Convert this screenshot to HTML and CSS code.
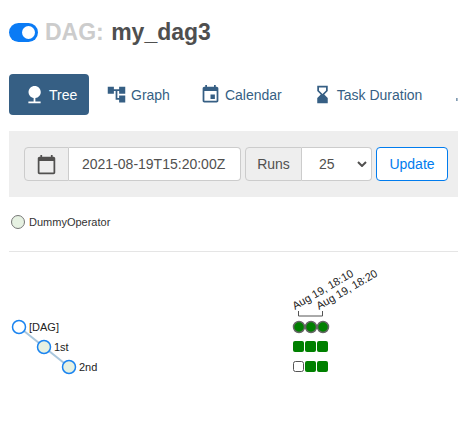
FILE: index.html
```html
<!DOCTYPE html>
<html lang="en">
<head>
  <meta charset="UTF-8">
  <title>DAG: my_dag3</title>
  <link rel="stylesheet" href="styles.css">
</head>
<body>
  <div class="container">
    <h4 class="dag-title">
      <span class="toggle"><span class="toggle-knob"></span></span>
      <span class="dag-text"><span class="dag-label">DAG:</span> <span class="dag-name">my_dag3</span></span>
    </h4>

    <ul class="tabs">
      <li class="tab active">
        <svg class="tab-icon" viewBox="0 0 24 24"><path d="M13 16.120c3.470-.41 6.170-3.360 6.170-6.950 0-3.870-3.130-7-7-7s-7 3.130-7 7c0 3.470 2.520 6.340 5.830 6.890V20H5v2h14v-2h-6v-3.880z"/></svg>
        Tree
      </li>
      <li class="tab">
        <svg class="tab-icon" viewBox="0 0 24 24"><path d="M22 11V3h-7v3H9V3H2v8h7V8h2v10h4v3h7v-8h-7v3h-2V8h2v3z"/></svg>
        Graph
      </li>
      <li class="tab">
        <svg class="tab-icon" viewBox="0 0 24 24"><path d="M17 12h-5v5h5v-5zM16 1v2H8V1H6v2H5c-1.110 0-1.990.9-1.990 2L3 19c0 1.100.89 2 2 2h14c1.100 0 2-.9 2-2V5c0-1.100-.9-2-2-2h-1V1h-2zm3 18H5V8h14v11z"/></svg>
        Calendar
      </li>
      <li class="tab">
        <svg class="tab-icon" viewBox="0 0 24 24"><path d="M18 22l-.01-6L14 12l3.990-4.010L18 2H6v6l4 4-4 3.990V22h12zM8 7.500V4h8v3.500l-4 4-4-4z"/></svg>
        Task Duration
      </li>
      <li class="tab">
        <svg class="tab-icon" viewBox="0 0 24 24"><path d="M5 16h1.200v3.400H5z"/></svg>
      </li>
    </ul>

    <form class="well">
      <div class="input-group">
        <span class="addon addon-icon">
          <svg class="cal-icon" viewBox="0 0 24 24"><path d="M20 3h-1V1h-2v2H7V1H5v2H4c-1.100 0-2 .9-2 2v16c0 1.100.9 2 2 2h16c1.100 0 2-.9 2-2V5c0-1.100-.9-2-2-2zm0 18H4V8h16v13z"/></svg>
        </span>
        <span class="field field-date">2021-08-19T15:20:00Z</span>
      </div>
      <div class="input-group">
        <span class="addon">Runs</span>
        <span class="field field-runs">
          25
          <svg class="chevron" viewBox="0 0 10 6"><path d="M1 1l4 4 4-4"/></svg>
        </span>
      </div>
      <button class="update-btn" type="button">Update</button>
    </form>

    <div class="legend">
      <span class="legend-dot"></span>
      <span>DummyOperator</span>
    </div>

    <hr class="divider">

    <svg class="tree" width="449" height="160" viewBox="9 252 449 160">
      <path class="link" d="M19 327L44 347L69 367"/>
      <circle class="node root" cx="19" cy="327" r="6.5"/>
      <circle class="node" cx="44" cy="347" r="6.5"/>
      <circle class="node" cx="69" cy="367" r="6.5"/>
      <text class="node-text" x="29" y="331">[DAG]</text>
      <text class="node-text" x="54" y="351">1st</text>
      <text class="node-text" x="79" y="371">2nd</text>

      <text class="node-text" transform="translate(295 310) rotate(-30)">Aug 19, 18:10</text>
      <text class="node-text" transform="translate(319 310) rotate(-30)">Aug 19, 18:20</text>
      <path class="bracket" d="M298.500 311v5h24v-5"/>

      <circle class="run" cx="299" cy="327" r="5.500"/>
      <circle class="run" cx="311" cy="327" r="5.500"/>
      <circle class="run" cx="323" cy="327" r="5.500"/>

      <rect class="task" x="293" y="341" width="11" height="11" rx="2"/>
      <rect class="task" x="305" y="341" width="11" height="11" rx="2"/>
      <rect class="task" x="317" y="341" width="11" height="11" rx="2"/>

      <rect class="task empty" x="293.500" y="361.500" width="10" height="10" rx="2"/>
      <rect class="task" x="305" y="361" width="11" height="11" rx="2"/>
      <rect class="task" x="317" y="361" width="11" height="11" rx="2"/>
    </svg>
  </div>
</body>
</html>
```

FILE: styles.css
```css
html, body {
  margin: 0;
  height: 100%;
  overflow: hidden;
}

body {
  background-color: #fff;
  font-family: "Liberation Sans", Arial, sans-serif;
  color: #51504f;
  font-size: 14px;
}

.container {
  padding: 19px 0 0 9px;
  width: 449px;
}

.dag-title {
  display: flex;
  align-items: center;
  height: 26px;
  margin: 0 0 29px;
  font-size: 23px;
  font-weight: bold;
}

.dag-text {
  word-spacing: 1px;
}

.toggle {
  display: flex;
  justify-content: flex-end;
  align-items: center;
  width: 29px;
  height: 19px;
  padding: 0 3px;
  box-sizing: border-box;
  margin-right: 7px;
  background: #0a7bf5;
  border-radius: 10px;
}

.toggle-knob {
  width: 13px;
  height: 13px;
  border-radius: 50%;
  background: #fff;
}

.dag-label {
  color: #ccc;
}

.dag-name {
  color: #4f4f4f;
}

.tabs {
  display: flex;
  list-style: none;
  margin: 0 0 16px;
  padding: 0;
  white-space: nowrap;
  overflow: hidden;
}

.tab {
  display: flex;
  flex: none;
  align-items: center;
  gap: 4px;
  height: 41px;
  padding: 0 15px;
  color: #365f84;
  font-size: 14px;
  border-radius: 4px;
  box-sizing: border-box;
}

.tab.active {
  background: #365f84;
  color: #fff;
  width: 80px;
  margin-right: 2px;
}

.tab-icon {
  width: 21px;
  height: 21px;
  fill: currentColor;
  flex: none;
}

.well {
  display: flex;
  gap: 4px;
  align-items: center;
  height: 66px;
  padding: 0 10px 0 15px;
  box-sizing: border-box;
  background: #eee;
}

.input-group {
  display: flex;
  height: 34px;
}

.addon {
  display: flex;
  align-items: center;
  justify-content: center;
  box-sizing: border-box;
  width: 57px;
  background: #eee;
  border: 1px solid #ccc;
  border-radius: 4px 0 0 4px;
  color: #51504f;
}

.addon-icon {
  width: 45px;
}

.cal-icon {
  width: 21px;
  height: 21px;
  fill: #51504f;
}

.field {
  display: flex;
  align-items: center;
  box-sizing: border-box;
  background: #fff;
  border: 1px solid #ccc;
  border-left: none;
  border-radius: 0 4px 4px 0;
  color: #51504f;
}

.field-date {
  width: 172px;
  padding-left: 13px;
}

.field-runs {
  width: 70px;
  padding-left: 17px;
  justify-content: space-between;
  padding-right: 4px;
}

.chevron {
  width: 10px;
  height: 6px;
  fill: none;
  stroke: #51504f;
  stroke-width: 2;
}

.update-btn {
  width: 72px;
  height: 34px;
  padding: 0;
  background: #fff;
  color: #017cee;
  border: 1px solid #017cee;
  border-radius: 4px;
  font-family: inherit;
  font-size: 14px;
}

.legend {
  display: flex;
  align-items: center;
  gap: 4px;
  height: 14px;
  margin: 18px 0 0 2px;
  font-size: 11px;
  color: #333;
}

.legend-dot {
  width: 14px;
  height: 14px;
  box-sizing: border-box;
  border: 1px solid #777;
  border-radius: 50%;
  background: #e6f1e2;
}

.divider {
  margin: 22px 0 0;
  border: none;
  border-top: 1px solid #e5e5e5;
}

.tree {
  display: block;
}

.link {
  fill: none;
  stroke: #a9c7de;
  stroke-width: 2;
}

.node {
  fill: #e6f1e2;
  stroke: #1a84f0;
  stroke-width: 1.5;
}

.node.root {
  fill: #fff;
}

.node-text {
  font-size: 11px;
  fill: #222;
}

.bracket {
  fill: none;
  stroke: #555;
  stroke-width: 1;
}

.run {
  fill: #008000;
  stroke: #666;
  stroke-width: 1.5;
}

.task {
  fill: #008000;
}

.task.empty {
  fill: #fff;
  stroke: #555;
  stroke-width: 1;
}
```
